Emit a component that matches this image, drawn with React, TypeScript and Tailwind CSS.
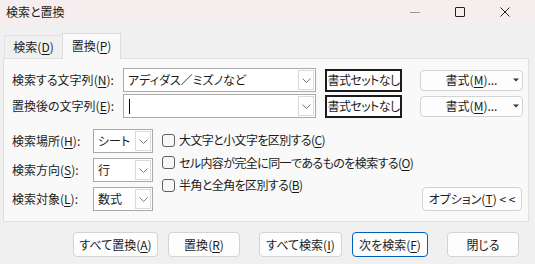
import type { ReactNode } from 'react'

/**
 * Chevron used by the combo boxes
 */
function Chevron() {
  return (
    <svg width="9" height="5" viewBox="0 0 9 5" fill="none" aria-hidden="true">
      <path d="M0.5 0.5 L4.5 4.5 L8.5 0.5" stroke="#7a7a7a" strokeWidth="1" />
    </svg>
  )
}

// Mnemonic letter, e.g. (N)
function Key({ children }: { children: ReactNode }) {
  return (
    <>
      (<u className="underline underline-offset-[2px]">{children}</u>)
    </>
  )
}

function Combo({ value, caret }: { value?: string; caret?: boolean }) {
  return (
    <div className="flex h-[24px] w-[193px] shrink-0 items-stretch border border-[#a9a9a9] bg-white">
      <div className="flex flex-1 items-center pl-[4px]">
        {value}
        {caret && <span className="ml-[1px] h-[15px] w-px bg-black" />}
      </div>
      <div className="m-px flex w-[16px] items-center justify-center border border-[#dadada] bg-white">
        <Chevron />
      </div>
    </div>
  )
}

function Select({ value }: { value: string }) {
  return (
    <div className="flex h-[24px] w-[60px] shrink-0 items-stretch border border-[#a9a9a9] bg-white">
      <div className="flex flex-1 items-center pl-[4px]">{value}</div>
      <div className="m-px flex w-[16px] items-center justify-center border border-[#dadada] bg-white">
        <Chevron />
      </div>
    </div>
  )
}

function Check({ children }: { children: ReactNode }) {
  return (
    <div className="flex h-[22.5px] items-center">
      <span className="h-[13px] w-[13px] shrink-0 rounded-[3px] border border-[#5f5f5f] bg-[#f7f7f7]" />
      <span className="ml-[4px] tracking-[-0.6px]">{children}</span>
    </div>
  )
}

function Button({ children, width, primary }: { children: ReactNode; width: string; primary?: boolean }) {
  return (
    <div
      className={`flex h-[25px] items-center justify-center rounded-[4px] border bg-[#fdfdfd] ${width} ${
        primary ? 'border-[#005fb8]' : 'border-[#d3d3d3]'
      }`}
    >
      {children}
    </div>
  )
}

function NoFormat() {
  return (
    <div className="ml-[9px] flex h-[23px] w-[77px] shrink-0 items-center justify-center border-2 border-[#1b1b1b] bg-white tracking-[-0.6px]">
      書式セットなし
    </div>
  )
}

function FormatButton() {
  return (
    <div className="ml-[18px] flex h-[21px] w-[103px] shrink-0 items-center rounded-[4px] border border-[#d3d3d3] bg-[#fdfdfd]">
      <span className="w-[12px]" />
      <span className="flex-1 text-center">
        書式<Key>M</Key>...
      </span>
      <svg width="12" height="4" viewBox="0 0 12 4" aria-hidden="true">
        <path d="M3 0.5 L9 0.5 L6 3.5 Z" fill="#333" />
      </svg>
    </div>
  )
}

export default function App() {
  return (
    <div
      className="flex h-[264px] w-[535px] flex-col whitespace-nowrap bg-[#f0f0f0] text-[12px] leading-none text-[#1b1b1b] [font-feature-settings:'palt']"
      style={{ fontFamily: '"Noto Sans CJK JP", "Noto Sans", sans-serif' }}
    >
      {/* Title bar */}
      <div className="flex h-[24px] items-center bg-[#f6eeee]">
        <span className="ml-[6px]">検索と置換</span>
        <div className="ml-auto mr-[8px] flex h-full">
          <div className="flex w-[45px] items-center justify-center">
            <span className="h-px w-[10px] bg-[#9a9a9a]" />
          </div>
          <div className="flex w-[45px] items-center justify-center">
            <span className="h-[10px] w-[10px] rounded-[1px] border border-[#222]" />
          </div>
          <div className="flex w-[45px] items-center justify-center">
            <svg width="10" height="10" viewBox="0 0 10 10" aria-hidden="true">
              <path d="M0.5 0.5 L9.5 9.5 M9.5 0.5 L0.5 9.5" stroke="#222" strokeWidth="1" />
            </svg>
          </div>
        </div>
      </div>

      {/* Tabs */}
      <div className="flex h-[34px] items-end pl-[4px]">
        <div className="flex h-[23px] w-[58px] items-center justify-center border-l border-t border-[#e2e2e2]">
          検索<Key>D</Key>
        </div>
        <div className="relative z-10 mb-[-1px] flex h-[26px] w-[59px] items-center justify-center border-l border-r border-t border-[#dcdcdc] bg-[#f9f9f9] pb-[2px]">
          置換<Key>P</Key>
        </div>
      </div>

      {/* Panel */}
      <div className="ml-[3px] flex h-[164px] w-[526px] flex-col border border-[#e0e0e0] bg-[#f9f9f9] pt-[9px]">
        <div className="flex flex-col gap-[2px] pl-[8px]">
          <div className="flex h-[24px] items-center">
            <span className="w-[111px] shrink-0">
              検索する文字列<Key>N</Key>:
            </span>
            <Combo value="アディダス／ミズノなど" />
            <NoFormat />
            <FormatButton />
          </div>
          <div className="flex h-[24px] items-center">
            <span className="w-[111px] shrink-0">
              置換後の文字列<Key>E</Key>:
            </span>
            <Combo caret />
            <NoFormat />
            <FormatButton />
          </div>
        </div>

        <div className="mt-[11px] flex pl-[8px] pr-[6px]">
          <div className="flex shrink-0 flex-col gap-[5px]">
            <div className="flex items-center">
              <span className="w-[81px]">
                検索場所<Key>H</Key>:
              </span>
              <Select value="シート" />
            </div>
            <div className="flex items-center">
              <span className="w-[81px]">
                検索方向<Key>S</Key>:
              </span>
              <Select value="行" />
            </div>
            <div className="flex items-center">
              <span className="w-[81px]">
                検索対象<Key>L</Key>:
              </span>
              <Select value="数式" />
            </div>
          </div>

          <div className="ml-[9px] flex shrink-0 flex-col">
            <Check>
              大文字と小文字を区別する<Key>C</Key>
            </Check>
            <Check>
              セル内容が完全に同一であるものを検索する<Key>O</Key>
            </Check>
            <Check>
              半角と全角を区別する<Key>B</Key>
            </Check>
          </div>

          <div className="ml-auto flex h-[24px] w-[100px] shrink-0 items-center justify-center self-end rounded-[4px] border border-[#d3d3d3] bg-[#fdfdfd]">
            オプション<Key>T</Key>&nbsp;&lt; &lt;
          </div>
        </div>
      </div>

      {/* Bottom buttons */}
      <div className="mt-[10px] flex pl-[73px]">
        <Button width="w-[85px]">
          すべて置換<Key>A</Key>
        </Button>
        <div className="ml-[10px]">
          <Button width="w-[72px]">
            置換<Key>R</Key>
          </Button>
        </div>
        <div className="ml-[19px]">
          <Button width="w-[83px]">
            すべて検索<Key>I</Key>
          </Button>
        </div>
        <div className="ml-[10px]">
          <Button width="w-[76px]" primary>
            次を検索<Key>F</Key>
          </Button>
        </div>
        <div className="ml-[19px]">
          <Button width="w-[72px]">閉じる</Button>
        </div>
      </div>
    </div>
  )
}
